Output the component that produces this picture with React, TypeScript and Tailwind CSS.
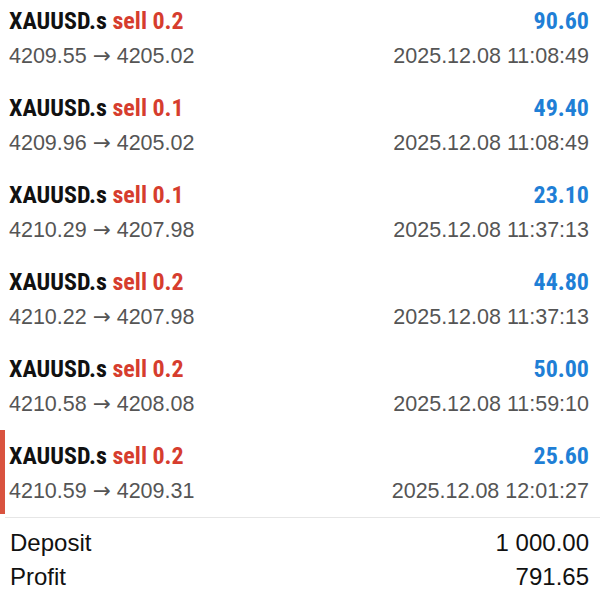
import React from "react";

const rows = [
  { vol: "0.2", open: "4209.55", close: "4205.02", profit: "90.60", time: "2025.12.08 11:08:49" },
  { vol: "0.1", open: "4209.96", close: "4205.02", profit: "49.40", time: "2025.12.08 11:08:49" },
  { vol: "0.1", open: "4210.29", close: "4207.98", profit: "23.10", time: "2025.12.08 11:37:13" },
  { vol: "0.2", open: "4210.22", close: "4207.98", profit: "44.80", time: "2025.12.08 11:37:13" },
  { vol: "0.2", open: "4210.58", close: "4208.08", profit: "50.00", time: "2025.12.08 11:59:10" },
  { vol: "0.2", open: "4210.59", close: "4209.31", profit: "25.60", time: "2025.12.08 12:01:27" },
];

const cond = { fontFamily: "Roboto, sans-serif", fontStretch: "80%" };

export default function App() {
  return (
    <div className="w-[600px] h-[600px] overflow-hidden bg-white font-['Liberation_Sans',Arial,sans-serif]">
      <div className="-mt-[5px]">
        {rows.map((r, i) => {
          const last = i === rows.length - 1;
          return (
            <div key={i} className="relative h-[87px] pl-[9px] pr-[11px] pt-[12px]">
              {last && <div className="absolute left-0 top-0 bottom-[3px] w-[5px] bg-[#d9533f]" />}
              <div className="flex justify-between items-baseline h-[28px] leading-[28px] text-[24px] font-bold" style={cond}>
                <span>
                  <span className="text-[#111]">XAUUSD.s</span>{" "}
                  <span className="text-[#d63d2e]">sell {r.vol}</span>
                </span>
                <span className="text-[#1f7fd6]">{r.profit}</span>
              </div>
              <div className="mt-[8px] flex justify-between h-[26px] leading-[26px] text-[21.5px] text-[#555]">
                <span>
                  {r.open} <span className="font-['DejaVu_Sans']">→</span> {r.close}
                </span>
                <span>{r.time}</span>
              </div>
            </div>
          );
        })}
      </div>
      <div className="h-px bg-[#e6e6e6] ml-[5px]" />
      <div className="pl-[10px] pr-[11px] pt-[8px] text-[24px] text-[#111]">
        <div className="flex justify-between leading-[34px]">
          <span>Deposit</span>
          <span>1 000.00</span>
        </div>
        <div className="flex justify-between leading-[34px]">
          <span>Profit</span>
          <span>791.65</span>
        </div>
      </div>
    </div>
  );
}
